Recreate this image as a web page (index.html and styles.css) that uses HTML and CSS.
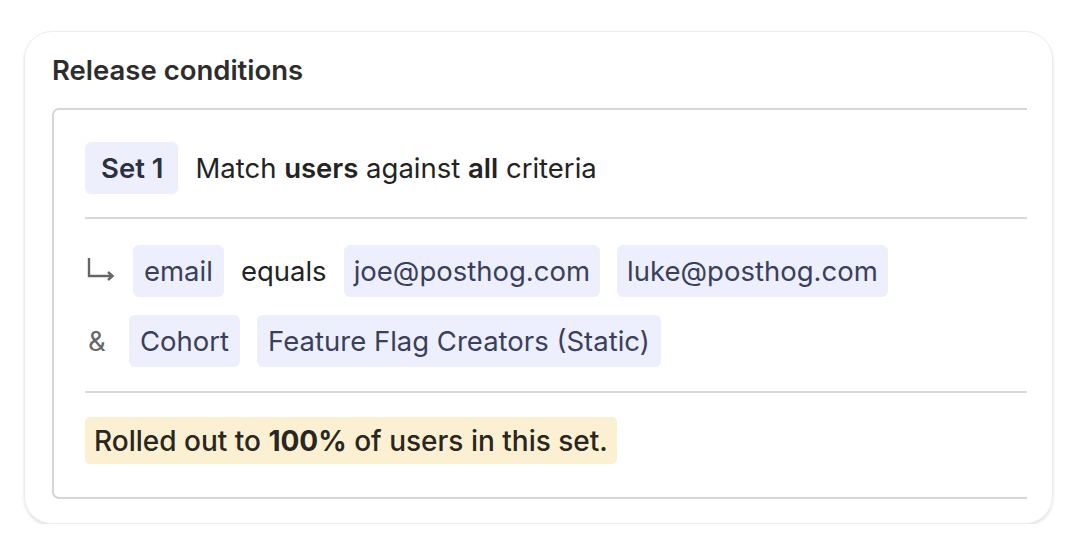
FILE: index.html
```html
<!DOCTYPE html>
<html>
<head>
<meta charset="utf-8">
<link rel="stylesheet" href="styles.css">
</head>
<body>
<div class="card">
  <h2 class="title">Release conditions</h2>
  <div class="clip">
    <div class="group">
      <div class="head">
        <span class="tag set">Set 1</span>
        <span class="text">Match <b>users</b> against <b>all</b> criteria</span>
      </div>
      <div class="divider"></div>
      <div class="rows">
        <div class="row">
          <span class="lead arrow"><svg width="28" height="26" viewBox="0 0 28 26"><path d="M2 2 V20 H25" fill="none" stroke="#666666" stroke-width="2.4"/><path d="M21 16 L25.5 20 L21 24" fill="none" stroke="#666666" stroke-width="2.4"/></svg></span>
          <span class="tag wide">email</span>
          <span class="plain">equals</span>
          <span class="tag">joe@posthog.com</span>
          <span class="tag">luke@posthog.com</span>
        </div>
        <div class="row">
          <span class="lead amp">&amp;</span>
          <span class="tag wide">Cohort</span>
          <span class="tag wide">Feature Flag Creators (Static)</span>
        </div>
      </div>
      <div class="divider second"></div>
      <div class="rollout"><span class="hl">Rolled out to <b>100%</b> of users in this set.</span></div>
    </div>
  </div>
</div>
</body>
</html>
```
FILE: styles.css
```css
html, body { margin: 0; padding: 0; background: #ffffff; }
body { font-family: Inter, "Noto Sans", sans-serif; color: #2b2b2b; }
.card {
  margin: 31px 0 0 24px;
  border: 1px solid #ececec;
  border-radius: 28px;
  box-shadow: 0 2px 3px rgba(0,0,0,0.12);
  padding: 0 25px 0 27px;
  box-sizing: border-box;
  width: 1029px;
  height: 493px;
}
.title {
  margin: 0;
  padding-top: 21px;
  height: 76px;
  box-sizing: border-box;
  font-size: 27.5px;
  font-weight: 600;
  line-height: 34px;
  color: #2d2d2d;
}
.clip { overflow: hidden; }
.group {
  width: calc(100% + 20px);
  border: 2px solid #d6d6d6;
  border-radius: 7px;
  padding: 32px 0 31px 31px;
  box-sizing: border-box;
  height: 391px;
}
.head { display: flex; align-items: center; gap: 17px; }
.tag {
  display: inline-flex;
  align-items: center;
  height: 52px;
  padding: 0 10px;
  background: #edeffc;
  border-radius: 6px;
  font-size: 27.5px;
  color: #3a3f5c;
  box-sizing: border-box;
}
.tag.wide { padding: 0 11px; }
.set { font-weight: 600; color: #2c3040; padding: 0 15px 0 16px; }
.text { font-size: 27.5px; color: #232323; }
.text b { font-weight: 600; }
.divider { height: 2px; background: #d9d9d9; margin: 23px 0 26px 0; }
.divider.second { margin: 24px 0 24px 0; }
.rows { display: flex; flex-direction: column; gap: 18px; }
.row { display: flex; align-items: center; gap: 17px; }
.lead { display: inline-flex; align-items: center; color: #666666; font-size: 27.5px; box-sizing: border-box; }
.arrow { width: 31px; padding-left: 2px; margin-bottom: 4px; }
.amp { width: 27px; padding-left: 3px; }
.plain { font-size: 27.5px; color: #232323; }
.rollout { display: flex; }
.hl {
  display: inline-flex;
  align-items: center;
  height: 47px;
  padding: 0 9px 0 9px;
  background: #fbf0d2;
  border-radius: 5px;
  font-size: 28px;
  font-weight: 500;
  color: #2a2620;
  white-space: pre;
}
.hl b { font-weight: 650; }
```
